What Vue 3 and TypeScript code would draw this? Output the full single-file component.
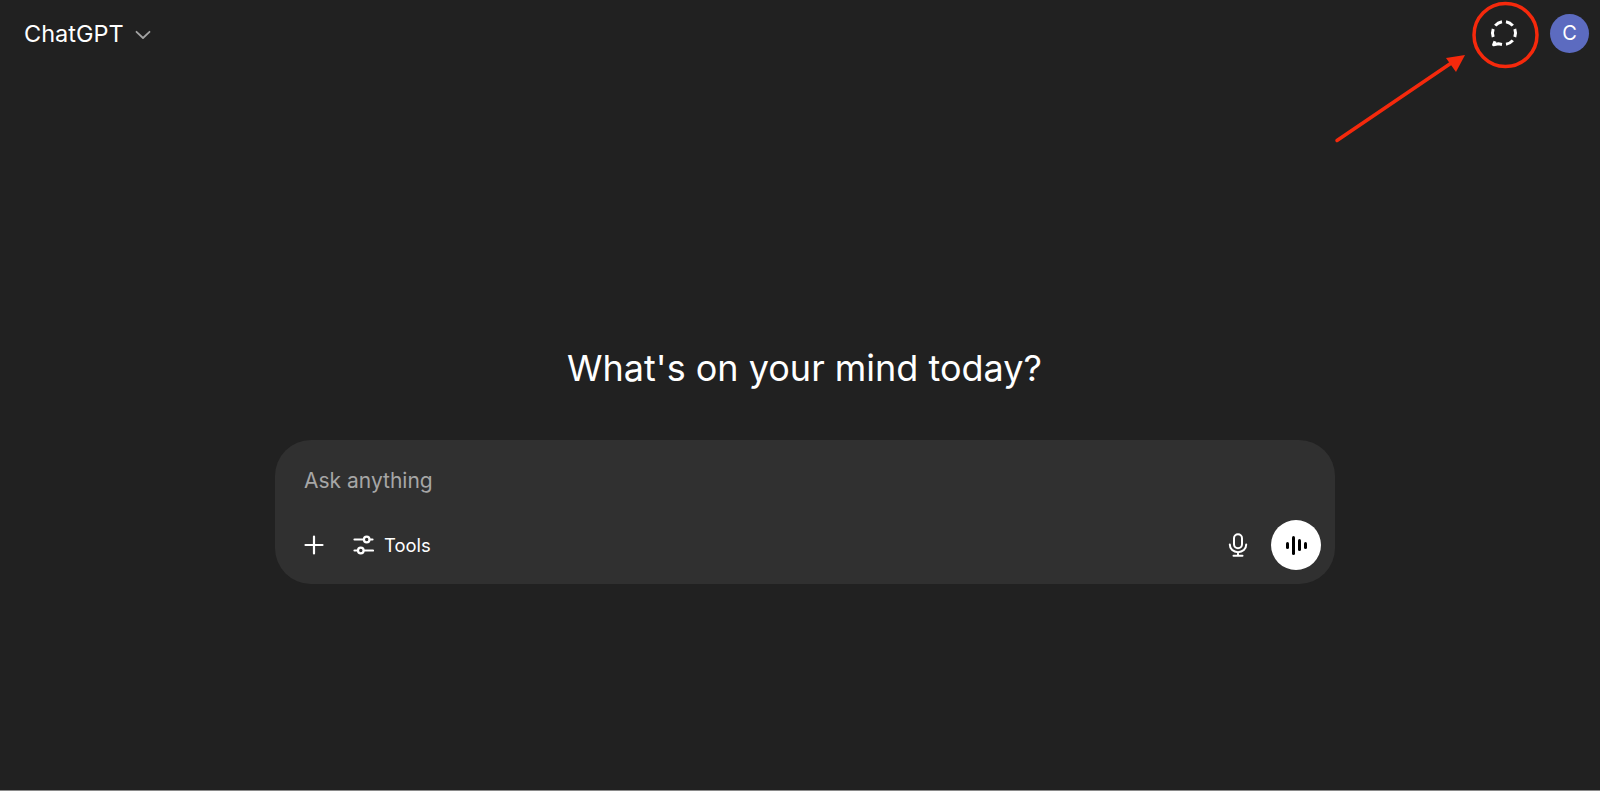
<template>
  <div class="page">
    <header class="topbar">
      <div class="model">
        <span class="model-name">ChatGPT</span>
        <svg class="chevron" width="16" height="10" viewBox="0 0 16 10" fill="none">
          <path d="M1.5 1.8 8 8l6.5-6.2" stroke="#a3a3a3" stroke-width="1.8" stroke-linecap="round" stroke-linejoin="round" />
        </svg>
      </div>
      <div class="actions">
        <svg class="temp-chat" width="28" height="28" viewBox="0 -1 28 28" fill="none" stroke="#fff" stroke-width="3" stroke-linejoin="round">
          <path d="M12 1.670A11.500 11.500 0 0 0 5.200 5.600" />
          <path d="M16 1.670A11.500 11.500 0 0 1 22.800 5.600" />
          <path d="M24.800 9.070A11.500 11.500 0 0 1 24.800 16.900" />
          <path d="M22.800 20.400A11.500 11.500 0 0 1 16 24.300" />
          <path d="M12 24.400 8.500 23.800 3.600 24.800 5 21.200" />
          <path d="M3.200 9.070A11.500 11.500 0 0 0 3.200 16.900" />
        </svg>
        <div class="avatar">C</div>
      </div>
    </header>

    <main class="center">
      <h1 class="title">What's on your mind today?</h1>
      <section class="composer">
        <div class="placeholder">{{ placeholder }}</div>
        <div class="toolbar">
          <div class="left-tools">
            <svg width="20" height="20" viewBox="0 0 20 20" fill="none">
              <path d="M10 1.500v17M1.500 10h17" stroke="#fff" stroke-width="2.200" stroke-linecap="round" />
            </svg>
            <div class="tools">
              <svg width="21" height="20" viewBox="0 0 21 20" fill="none" stroke="#fff" stroke-width="2.200" stroke-linecap="round">
                <path d="M1.500 4.500h9M16.800 4.500h2.700M1.500 15.500h3M11 15.500h9" />
                <circle cx="13.700" cy="4.500" r="2.800" />
                <circle cx="7.800" cy="15.500" r="2.800" />
              </svg>
              <span>Tools</span>
            </div>
          </div>
          <div class="right-tools">
            <svg width="20" height="24" viewBox="0 0 20 24" fill="none" stroke="#fff" stroke-width="2" stroke-linecap="round">
              <rect x="6" y="1.200" width="8" height="14" rx="4" />
              <path d="M1.800 11.500c0 4.700 3.600 7.700 8.200 7.700s8.200-3 8.200-7.700M10 19.200v3.300M5.500 22.700h9" />
            </svg>
            <button class="voice" type="button" aria-label="Voice">
              <span v-for="(h, i) in bars" :key="i" class="bar" :style="{ height: h + 'px' }"></span>
            </button>
          </div>
        </div>
      </section>
    </main>

    <div class="edge"></div>

    <svg class="annotation" width="1600" height="791" viewBox="0 0 1600 791" fill="none">
      <circle cx="1505.500" cy="35" r="31.500" stroke="#f5290c" stroke-width="3.500" />
      <path d="M1337 140.500 1452 62.500" stroke="#f5290c" stroke-width="3.500" stroke-linecap="round" />
      <path d="M1465 55 1446 58 1456 72Z" fill="#f5290c" />
    </svg>
  </div>
</template>

<script setup lang="ts">
const placeholder = 'Ask anything'
const bars: number[] = [7, 19, 12, 7]
</script>

<style>
body {
  margin: 0;
  background: #212121;
}
</style>

<style scoped>
.page {
  position: relative;
  height: 791px;
  display: flex;
  flex-direction: column;
  background: #212121;
  color: #fff;
  font-family: Inter, "Liberation Sans", sans-serif;
  overflow: hidden;
}

.topbar {
  height: 66px;
  padding: 0 11px 0 24px;
  display: flex;
  align-items: center;
  justify-content: space-between;
  flex-shrink: 0;
}

.model {
  display: flex;
  align-items: center;
  gap: 11px;
}

.model-name {
  font-size: 23.500px;
}

.chevron {
  margin-top: 3px;
}

.actions {
  display: flex;
  align-items: center;
  gap: 32px;
}

.avatar {
  width: 39px;
  height: 39px;
  border-radius: 50%;
  background: #5c6bc0;
  display: flex;
  align-items: center;
  justify-content: center;
  font-size: 20px;
}

.center {
  flex: 1;
  display: flex;
  flex-direction: column;
  align-items: center;
  padding: 280px 0 0 9px;
}

.title {
  margin: 0 0 50px;
  font-size: 36px;
  line-height: 44px;
  font-weight: 400;
}

.composer {
  width: 1060px;
  height: 144px;
  box-sizing: border-box;
  margin-left: 1px;
  padding: 25px 14px 0 29px;
  border-radius: 36px;
  background: #303030;
}

.placeholder {
  font-size: 21px;
  line-height: 32px;
  color: #a6a6a6;
}

.toolbar {
  margin-top: 23px;
  display: flex;
  align-items: center;
  justify-content: space-between;
}

.left-tools,
.right-tools,
.tools {
  display: flex;
  align-items: center;
}

.left-tools {
  gap: 29px;
}

.tools {
  gap: 10px;
  font-size: 18.400px;
}

.right-tools {
  gap: 23px;
}

.voice {
  width: 50px;
  height: 50px;
  padding: 0;
  border: 0;
  border-radius: 50%;
  background: #fff;
  display: flex;
  align-items: center;
  justify-content: center;
  gap: 3px;
}

.bar {
  width: 3px;
  border-radius: 2px;
  background: #000;
}

.edge {
  height: 1px;
  background: #8a8a8a;
  flex-shrink: 0;
}

.annotation {
  position: absolute;
  left: 0;
  top: 0;
  pointer-events: none;
}
</style>
